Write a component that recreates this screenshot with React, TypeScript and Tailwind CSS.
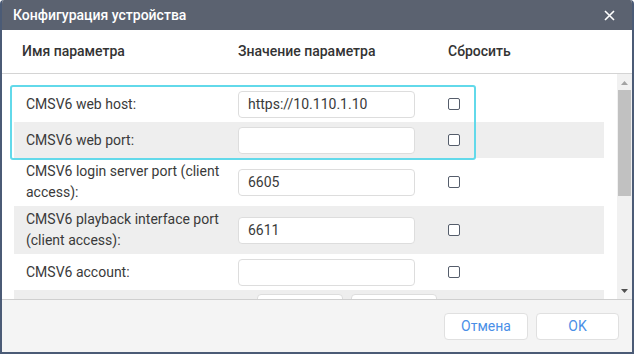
import React from "react";

type Row = {
  label: string;
  value?: string;
  tall?: boolean;
};

const ROWS: Row[] = [
  { label: "CMSV6 web host:", value: "https://10.110.1.10" },
  { label: "CMSV6 web port:", value: "" },
  { label: "CMSV6 login server port (client access):", value: "6605", tall: true },
  { label: "CMSV6 playback interface port (client access):", value: "6611", tall: true },
  { label: "CMSV6 account:", value: "" },
];

function Checkbox() {
  return <span className="block h-3 w-3 rounded-[2px] border-[1.5px] border-[#555d6b] bg-white" />;
}

function ParamRow({ row, striped }: { row: Row; striped: boolean }) {
  return (
    <div
      className={`flex items-center ${row.tall ? "h-12" : "h-9"} ${
        striped ? "bg-[#eeeeee]" : "bg-white"
      }`}
    >
      <div className="w-[224px] shrink-0 pl-3 pr-3 text-[14px] leading-[21px] text-[#3a3a3a]">
        {row.label}
      </div>
      <div className="flex h-[27px] w-[177px] shrink-0 items-center rounded-[4px] border border-[#dddddd] bg-white px-[9px] text-[14px] text-[#3a3a3a]">
        {row.value}
      </div>
      <div className="ml-[33px] flex items-center">
        <Checkbox />
      </div>
    </div>
  );
}

export default function App() {
  return (
    <div
      className="h-[354px] w-[634px] overflow-hidden bg-white"
      style={{ fontFamily: "Roboto, 'Noto Sans', sans-serif" }}
    >
      <div className="flex h-full flex-col overflow-hidden rounded-t-[4px] border-2 border-t-0 border-[#4b5b76] bg-white">
        {/* Title bar */}
        <div className="-mx-[2px] flex h-[30px] shrink-0 items-center justify-between rounded-t-[4px] bg-[#5b6270] pl-[13px] pr-[19px]">
          <span className="text-[14px] font-medium text-white">Конфигурация устройства</span>
          <svg width="11" height="11" viewBox="0 0 11 11" className="text-white">
            <path d="M1 1 L10 10 M10 1 L1 10" stroke="currentColor" strokeWidth="1.6" />
          </svg>
        </div>

        {/* Column headers */}
        <div className="flex h-[44px] shrink-0 items-center border-b border-[#d4d4d4] text-[14px] font-medium text-[#333]">
          <span className="w-[236px] pl-5">Имя параметра</span>
          <span className="w-[210px]">Значение параметра</span>
          <span>Сбросить</span>
        </div>

        {/* Scroll area */}
        <div className="flex min-h-0 flex-1">
          <div className="relative min-w-0 flex-1 overflow-hidden pl-3 pr-[13px] pt-[12px]">
            {ROWS.map((row, i) => (
              <ParamRow key={row.label} row={row} striped={i % 2 === 1} />
            ))}
            <div className="flex h-9 items-start gap-2 bg-[#eeeeee] pl-[243px] pt-1">
              <div className="h-[27px] w-[86px] rounded-[4px] border border-[#dddddd] bg-white" />
              <div className="h-[27px] w-[86px] rounded-[4px] border border-[#dddddd] bg-white" />
            </div>
            <div className="absolute left-[8px] top-[11px] h-[75px] w-[466px] rounded-[3px] border-2 border-[#62d9ea]" />
          </div>

          {/* Scrollbar */}
          <div className="flex w-[15px] shrink-0 flex-col items-center bg-[#f1f1f1]">
            <svg width="7" height="4" viewBox="0 0 7 4" className="mt-[7px] text-[#a3a3a3]">
              <path d="M0 4 L3.5 0 L7 4 Z" fill="currentColor" />
            </svg>
            <div className="mt-[5px] h-[106px] w-[13px] bg-[#c1c1c1]" />
            <div className="flex-1" />
            <svg width="7" height="4" viewBox="0 0 7 4" className="mb-[6px] text-[#505050]">
              <path d="M0 0 L7 0 L3.5 4 Z" fill="currentColor" />
            </svg>
          </div>
        </div>

        {/* Footer */}
        <div className="flex h-[53px] shrink-0 items-center justify-end gap-2 border-t border-[#cfcfcf] bg-[#f4f4f4] pr-[13px]">
          <button className="flex h-[27px] w-[84px] items-center justify-center rounded-[4px] border border-[#e0e0e0] bg-white text-[14px] text-[#4a8fe7]">
            Отмена
          </button>
          <button className="flex h-[27px] w-[83px] items-center justify-center rounded-[4px] border border-[#e0e0e0] bg-white text-[14px] text-[#4a8fe7]">
            OK
          </button>
        </div>
      </div>
    </div>
  );
}
